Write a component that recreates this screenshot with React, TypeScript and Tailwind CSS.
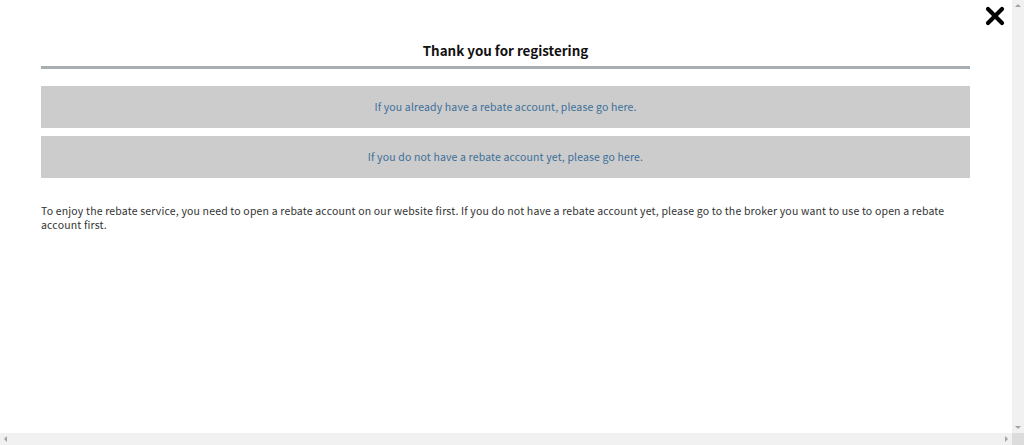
const font = { fontFamily: '"Noto Sans CJK JP", "Noto Sans", sans-serif' };

function CloseIcon() {
  return (
    <svg width="20" height="20" viewBox="0 0 20 20" aria-hidden="true">
      <path d="M3 3 L17 17 M17 3 L3 17" stroke="#000" strokeWidth="4.2" strokeLinecap="round" />
    </svg>
  );
}

function LinkBox({ label }: { label: string }) {
  return (
    <a
      href="#"
      className="flex h-[42px] items-center justify-center bg-[#cccccc] text-[10.5px] tracking-[0.15px] text-[#3d6f9a]"
    >
      {label}
    </a>
  );
}

export default function App() {
  return (
    <div className="flex h-[445px] w-[1024px] flex-col overflow-hidden bg-white" style={font}>
      <div className="flex h-[433px]">
        {/* Modal content */}
        <div className="relative w-[1012px] pl-[41px] pr-[42px]">
          <button className="absolute right-[7px] top-[6px]" aria-label="Close">
            <CloseIcon />
          </button>

          <div className="pt-[40px]">
            <h2 className="text-center text-[13.4px] font-bold leading-[20px] text-[#111]">
              Thank you for registering
            </h2>
            <div className="mt-[6px] h-[3px] bg-[#a9aeb2]" />
          </div>

          <div className="mt-[17px] flex flex-col gap-[8px]">
            <LinkBox label="If you already have a rebate account, please go here." />
            <LinkBox label="If you do not have a rebate account yet, please go here." />
          </div>

          <p className="mt-[26px] text-[10.5px] leading-[14px] tracking-[0.17px] text-[#333]">
            To enjoy the rebate service, you need to open a rebate account on our website first. If you
            do not have a rebate account yet, please go to the broker you want to use to open a rebate
            account first.
          </p>
        </div>

        {/* Vertical scrollbar */}
        <div className="flex w-[12px] flex-col items-center justify-between bg-[#f1f1f1] py-[4px]">
          <span className="block h-0 w-0 border-x-[3px] border-b-[3px] border-x-transparent border-b-[#a3a3a3]" />
          <span className="block h-0 w-0 border-x-[3px] border-t-[3px] border-x-transparent border-t-[#a3a3a3]" />
        </div>
      </div>

      {/* Horizontal scrollbar */}
      <div className="flex h-[12px]">
        <div className="flex w-[1012px] items-center justify-between bg-[#f1f1f1] px-[4px]">
          <span className="block h-0 w-0 border-y-[3px] border-r-[3px] border-y-transparent border-r-[#a3a3a3]" />
          <span className="block h-0 w-0 border-y-[3px] border-l-[3px] border-y-transparent border-l-[#a3a3a3]" />
        </div>
        <div className="w-[12px] bg-[#dcdcdc]" />
      </div>
    </div>
  );
}
